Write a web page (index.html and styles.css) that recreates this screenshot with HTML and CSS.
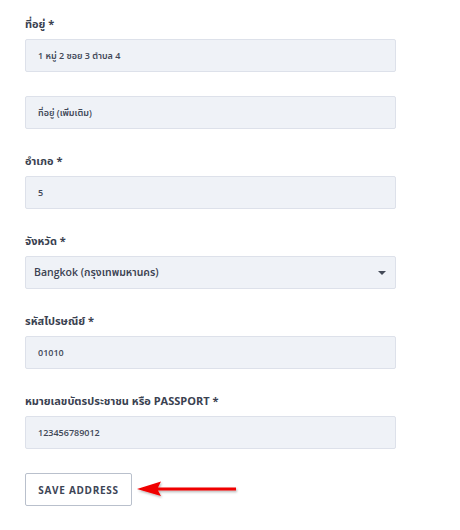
FILE: index.html
```html
<!DOCTYPE html>
<html lang="th">
<head>
<meta charset="utf-8">
<title>Address</title>
<link rel="stylesheet" href="styles.css">
</head>
<body>
<form class="form">
  <div class="group">
    <label class="label">ที่อยู่ *</label>
    <div class="input">1 หมู่ 2 ซอย 3 ตำบล 4</div>
  </div>
  <div class="group">
    <div class="input">ที่อยู่ (เพิ่มเติม)</div>
  </div>
  <div class="group">
    <label class="label">อำเภอ *</label>
    <div class="input">5</div>
  </div>
  <div class="group">
    <label class="label">จังหวัด *</label>
    <div class="input select"><span>Bangkok (กรุงเทพมหานคร)</span><span class="caret"></span></div>
  </div>
  <div class="group">
    <label class="label">รหัสไปรษณีย์ *</label>
    <div class="input">01010</div>
  </div>
  <div class="group">
    <label class="label">หมายเลขบัตรประชาชน หรือ PASSPORT *</label>
    <div class="input">123456789012</div>
  </div>
  <div class="actions">
    <div class="btn">SAVE ADDRESS</div>
    <svg class="arrow" width="102" height="18" viewBox="0 0 102 18">
      <defs>
        <filter id="sh" x="-10%" y="-30%" width="130%" height="180%">
          <feDropShadow dx="1" dy="1.5" stdDeviation="0.8" flood-color="#000" flood-opacity="0.3"/>
        </filter>
      </defs>
      <g filter="url(#sh)">
        <polygon points="0,8 24,0.5 21,6.5 99,6.5 99,9.5 21,9.5 24,15" fill="#f00000"/>
      </g>
    </svg>
  </div>
</form>
</body>
</html>
```

FILE: styles.css
```css
html, body {
  margin: 0;
  padding: 0;
  background: #ffffff;
}

body {
  font-family: "Open Sans", "Noto Sans", "Noto Sans Thai", "DejaVu Sans", sans-serif;
  color: #3b4252;
}

.form {
  width: 371px;
  padding: 16px 0 0 25px;
  display: flex;
  flex-direction: column;
  gap: 24px;
}

.group {
  display: flex;
  flex-direction: column;
}

.label {
  display: block;
  font-size: 11px;
  font-weight: 700;
  line-height: 15px;
  margin-bottom: 8px;
  color: #3a4150;
}

.input {
  box-sizing: border-box;
  height: 33px;
  background: #eff2f7;
  border: 1px solid #dde1ea;
  border-radius: 2px;
  padding: 0 12px;
  display: flex;
  align-items: center;
  font-size: 9px;
  font-weight: 600;
  color: #414857;
}

.select {
  padding: 0 8px 0 8px;
  justify-content: space-between;
  font-size: 10.5px;
  font-weight: 600;
  color: #3b4252;
}

.caret {
  width: 0;
  height: 0;
  border-left: 4px solid transparent;
  border-right: 4px solid transparent;
  border-top: 4px solid #444b58;
  margin-right: 1px;
}

.actions {
  display: flex;
  align-items: center;
  gap: 5px;
}

.btn {
  box-sizing: border-box;
  width: 107px;
  height: 33px;
  border: 1px solid #b9c0cc;
  border-radius: 2px;
  display: flex;
  align-items: center;
  justify-content: center;
  font-size: 10px;
  font-weight: 700;
  letter-spacing: 0.7px;
  color: #3d4556;
}

.arrow {
  display: block;
}
```
